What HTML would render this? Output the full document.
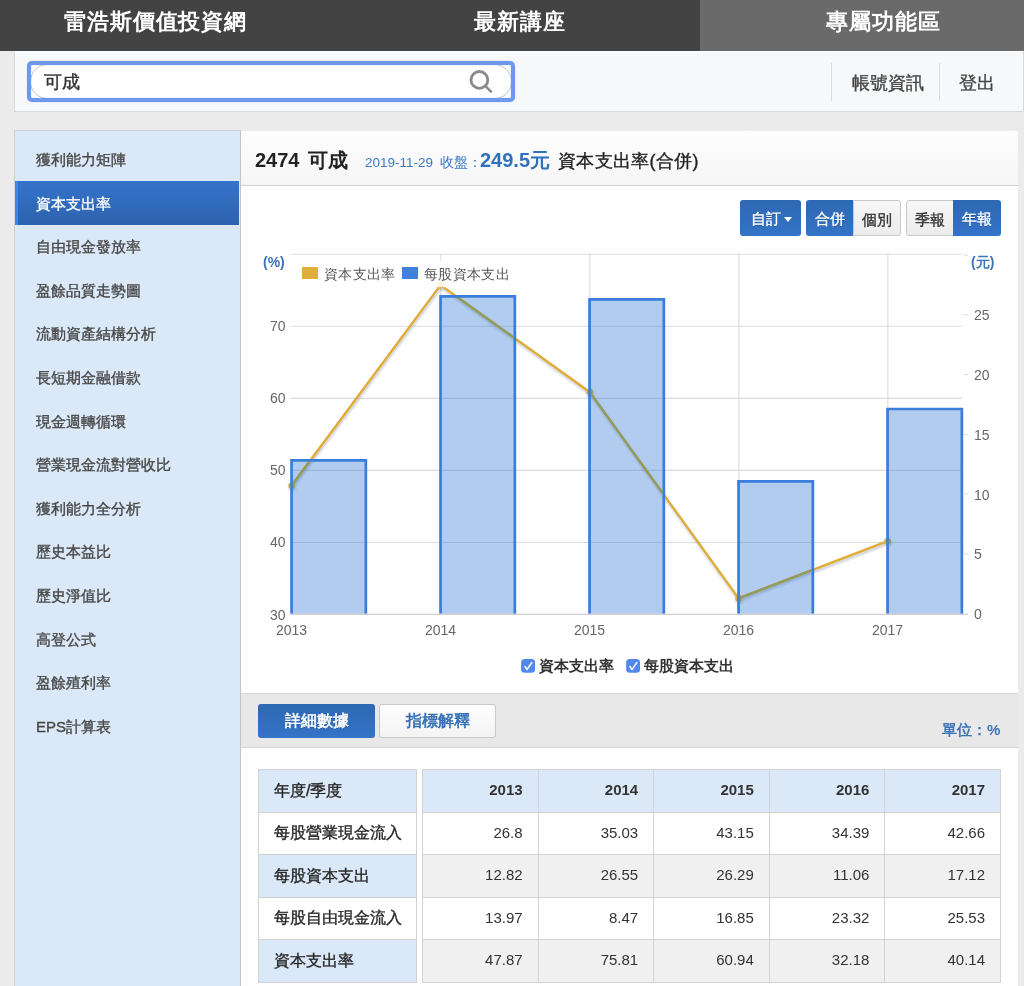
<!DOCTYPE html>
<html lang="zh-Hant">
<head>
<meta charset="utf-8">
<style>
*{box-sizing:border-box;margin:0;padding:0}
html,body{width:1024px;height:986px;overflow:hidden}
body{background:#ebebeb;font-family:"Liberation Sans",sans-serif;position:relative;color:#333}
#root{position:absolute;left:0;top:0;width:1024px;height:986px;overflow:hidden;will-change:transform}
.st{-webkit-text-stroke:0.35px currentColor}
.a{position:absolute;white-space:nowrap}
#nav{left:0;top:0;width:1024px;height:51px;background:#434343}
#nav3{left:700px;top:0;width:324px;height:51px;background:#6a6a6a}
.navt{color:#fff;font-size:22px;letter-spacing:0.9px;font-weight:bold;top:7px;line-height:30px}
#sp{left:14px;top:51px;width:1010px;height:61px;background:#f7f8fa;border:1px solid #d9d9d9;border-top:1px solid #fff}
#ring{left:27px;top:61px;width:488px;height:41px;border:4px solid #6d98ec;border-radius:5px;box-shadow:0 0 1px #6d98ec,inset 0 0 1px #6d98ec}
#ringbg{left:27px;top:61px;width:488px;height:41px;background:#fff;border-radius:5px}
#pill{left:30px;top:64px;width:482px;height:35px;border:1px solid #c4c4c4;border-radius:17.5px;background:#fff}
.sep{top:63px;width:1px;height:38px;background:#dcdcdc}
.hl{font-size:18px;color:#444;top:71px;line-height:24px;-webkit-text-stroke:0.35px currentColor}
#side{left:14px;top:130px;width:227px;height:880px;background:#dae8f7;border:1px solid #d0d0d0;border-right:1px solid #c4c4c4}
.si{left:36px;font-size:15px;color:#474747;line-height:20px;-webkit-text-stroke:0.35px currentColor}
#act{left:15px;top:181px;width:224px;height:44px;background:linear-gradient(#3573cb,#2d63ae);border-left:3px solid #3d86ea}
#main{left:241px;top:131px;width:777px;height:900px;background:#fff;border-top-right-radius:3px}
#hdr{left:241px;top:131px;width:777px;height:55px;border-top-right-radius:3px;background:linear-gradient(#fdfdfd,#f6f6f6);border-bottom:1px solid #d2d2d2}
.btn{top:200px;height:36px;font-size:15px;line-height:37px;text-align:center;color:#fff;-webkit-text-stroke:0.35px currentColor}
.bb{text-shadow:0 1px 0 rgba(0,0,0,0.25)}
.bb{background:linear-gradient(#2e68b3,#3473c7)}
.bw{background:linear-gradient(#f7f7f7,#ececec);color:#333;border:1px solid #c9c9c9}
#tabs{left:241px;top:693px;width:777px;height:55px;background:#e8e8e8;border-top:1px solid #d6d6d6;border-bottom:1px solid #d6d6d6}
table{border-collapse:collapse;position:absolute;top:769px;font-size:15px;table-layout:fixed;white-space:nowrap}
td{border:1px solid #d2d2d2;height:42.5px;padding:0 15px 2px;color:#333}
#lt td{background:#fff;font-size:16px;width:158px;padding:1px 15px 0;color:#262626;-webkit-text-stroke:0.35px currentColor}
#lt tr:nth-child(odd) td{background:#dae8f7}
#rt td{text-align:right;width:115.6px}
#rt tr:nth-child(1) td{background:#dae8f7;font-weight:bold}
#rt tr:nth-child(3) td,#rt tr:nth-child(5) td{background:#f0f0f0}
</style>
</head>
<body>
<div id="root">
<div id="nav" class="a"></div>
<div id="nav3" class="a"></div>
<div class="a navt" style="left:64px">雷浩斯價值投資網</div>
<div class="a navt" style="left:474px">最新講座</div>
<div class="a navt" style="left:826px">專屬功能區</div>

<div id="sp" class="a"></div>
<div id="ringbg" class="a"></div>
<div id="pill" class="a"></div>
<div id="ring" class="a"></div>
<div class="a" style="left:44px;top:70px;font-size:18px;line-height:24px;color:#333;-webkit-text-stroke:0.4px #333">可成</div>
<svg class="a" style="left:466px;top:67px" width="28" height="28" viewBox="0 0 28 28"><circle cx="13.4" cy="12.9" r="8.4" fill="none" stroke="#8a8a8a" stroke-width="2.8"/><line x1="19.8" y1="19.4" x2="25" y2="24.6" stroke="#8a8a8a" stroke-width="2.6" stroke-linecap="round"/></svg>
<div class="a sep" style="left:831px"></div>
<div class="a sep" style="left:939px"></div>
<div class="a hl" style="left:852px">帳號資訊</div>
<div class="a hl" style="left:959px">登出</div>

<div id="side" class="a"></div>
<div id="act" class="a"></div>
<div class="a si" style="top:150px">獲利能力矩陣</div>
<div class="a si" style="top:193.6px;color:#fff">資本支出率</div>
<div class="a si" style="top:237.2px">自由現金發放率</div>
<div class="a si" style="top:280.8px">盈餘品質走勢圖</div>
<div class="a si" style="top:324.4px">流動資產結構分析</div>
<div class="a si" style="top:368px">長短期金融借款</div>
<div class="a si" style="top:411.6px">現金週轉循環</div>
<div class="a si" style="top:455.2px">營業現金流對營收比</div>
<div class="a si" style="top:498.8px">獲利能力全分析</div>
<div class="a si" style="top:542.4px">歷史本益比</div>
<div class="a si" style="top:586px">歷史淨值比</div>
<div class="a si" style="top:629.6px">高登公式</div>
<div class="a si" style="top:673.2px">盈餘殖利率</div>
<div class="a si" style="top:716.8px">EPS計算表</div>

<div id="main" class="a"></div>
<div id="hdr" class="a"></div>
<div class="a" style="left:255px;top:148px;font-size:20px;font-weight:bold;color:#222;line-height:24px">2474</div>
<div class="a" style="left:307.5px;top:148px;font-size:20px;font-weight:bold;color:#222;line-height:24px">可成</div>
<div class="a" style="left:365px;top:154px;font-size:13.5px;color:#3d7ac4;line-height:18px">2019-11-29</div>
<div class="a" style="left:439.5px;top:154px;font-size:13.5px;color:#3d7ac4;line-height:18px">收盤：</div>
<div class="a" style="left:480px;top:148px;font-size:20px;font-weight:bold;color:#3071bd;line-height:24px">249.5元</div>
<div class="a st" style="left:558px;top:149px;font-size:18px;letter-spacing:0.3px;color:#222;line-height:24px">資本支出率(合併)</div>

<div class="a btn bb" style="left:740px;width:61px;border-radius:3px;text-align:left;padding-left:11px">自訂<span style="position:absolute;left:44px;top:17px;width:0;height:0;border-left:4.5px solid transparent;border-right:4.5px solid transparent;border-top:5px solid #fff"></span></div>
<div class="a btn bb" style="left:806px;width:47px;border-radius:3px 0 0 3px">合併</div>
<div class="a btn bw" style="left:853px;width:48px;border-radius:0 3px 3px 0">個別</div>
<div class="a btn bw" style="left:906px;width:48px;border-radius:3px 0 0 3px">季報</div>
<div class="a btn bb" style="left:953px;width:48px;border-radius:0 3px 3px 0">年報</div>

<svg class="a" style="left:241px;top:186px" width="777" height="507" viewBox="241 186 777 507">
 <defs>
  <filter id="sh" x="-10%" y="-10%" width="120%" height="120%"><feDropShadow dx="0.6" dy="2" stdDeviation="1" flood-color="#304060" flood-opacity="0.3"/></filter>
  <clipPath id="bc"><rect x="292.90" y="461.75" width="71.60" height="151.85"/><rect x="441.90" y="297.68" width="71.60" height="315.92"/><rect x="590.90" y="300.78" width="71.60" height="312.82"/><rect x="739.90" y="482.78" width="71.60" height="130.82"/><rect x="888.90" y="410.37" width="71.60" height="203.23"/></clipPath>
  <clipPath id="pl"><rect x="241" y="287.2" width="777" height="400"/><rect x="241" y="186" width="190" height="120"/><rect x="520" y="186" width="500" height="120"/></clipPath>
 </defs>
 <g stroke="#dcdcdc" stroke-width="1.1">
  <line x1="290.3" y1="254.20" x2="962" y2="254.20"/>
  <line x1="290.3" y1="326.27" x2="962" y2="326.27"/>
  <line x1="290.3" y1="398.34" x2="962" y2="398.34"/>
  <line x1="290.3" y1="470.41" x2="962" y2="470.41"/>
  <line x1="290.3" y1="542.48" x2="962" y2="542.48"/>
  <line x1="440.85" y1="613.60" x2="440.85" y2="254.20"/>
  <line x1="589.85" y1="613.60" x2="589.85" y2="254.20"/>
  <line x1="738.85" y1="613.60" x2="738.85" y2="254.20"/>
  <line x1="887.85" y1="613.60" x2="887.85" y2="254.20"/>
 </g>
 <g stroke="#e0e0e0" stroke-width="1.1">
  <line x1="963.5" y1="255.10" x2="968" y2="255.10"/>
  <line x1="963.5" y1="314.85" x2="968" y2="314.85"/>
  <line x1="963.5" y1="374.60" x2="968" y2="374.60"/>
  <line x1="963.5" y1="434.35" x2="968" y2="434.35"/>
  <line x1="963.5" y1="494.10" x2="968" y2="494.10"/>
  <line x1="963.5" y1="553.85" x2="968" y2="553.85"/>
 </g>
 <g filter="url(#sh)">
  <polyline points="291.55,485.74 440.55,285.13 589.55,391.90 738.55,598.40 887.55,541.24" fill="none" stroke="#e0ab36" stroke-width="2.4" stroke-linejoin="round"/>
  <g fill="#e0ab36"><circle cx="291.55" cy="485.74" r="3.3"/><circle cx="440.55" cy="285.13" r="3.3"/><circle cx="589.55" cy="391.90" r="3.3"/><circle cx="738.55" cy="598.40" r="3.3"/><circle cx="887.55" cy="541.24" r="3.3"/></g>
 </g>
 <rect x="298" y="260.5" width="214" height="26.7" fill="#fff" fill-opacity="0.86"/>
 <g fill="rgba(50,120,210,0.38)">
  <rect x="291.55" y="460.40" width="74.3" height="153.50"/>
  <rect x="440.55" y="296.33" width="74.3" height="317.57"/>
  <rect x="589.55" y="299.43" width="74.3" height="314.47"/>
  <rect x="738.55" y="481.43" width="74.3" height="132.47"/>
  <rect x="887.55" y="409.02" width="74.3" height="204.88"/>
 </g>
 <g fill="none" stroke="#3a7ddc" stroke-width="2.7" stroke-linejoin="miter">
  <path d="M291.55 613.80 V460.40 H365.85 V613.80"/>
  <path d="M440.55 613.80 V296.33 H514.85 V613.80"/>
  <path d="M589.55 613.80 V299.43 H663.85 V613.80"/>
  <path d="M738.55 613.80 V481.43 H812.85 V613.80"/>
  <path d="M887.55 613.80 V409.02 H961.85 V613.80"/>
 </g>
 <g clip-path="url(#bc)">
  <polyline points="291.55,485.74 440.55,285.13 589.55,391.90 738.55,598.40 887.55,541.24" fill="none" stroke="#949c5a" stroke-width="2.4" stroke-linejoin="round"/>
  <g fill="#949c5a"><circle cx="291.55" cy="485.74" r="3.3"/><circle cx="440.55" cy="285.13" r="3.3"/><circle cx="589.55" cy="391.90" r="3.3"/><circle cx="738.55" cy="598.40" r="3.3"/><circle cx="887.55" cy="541.24" r="3.3"/></g>
 </g>
 <line x1="290.3" y1="614.3" x2="968" y2="614.3" stroke="#d0d0d0" stroke-width="1.2"/>
 <g font-family="Liberation Sans" font-size="14" fill="#666">
  <text x="285.5" y="331.27" text-anchor="end">70</text>
  <text x="285.5" y="403.34" text-anchor="end">60</text>
  <text x="285.5" y="475.41" text-anchor="end">50</text>
  <text x="285.5" y="547.48" text-anchor="end">40</text>
  <text x="285.5" y="619.55" text-anchor="end">30</text>
  <text x="974" y="320.35">25</text>
  <text x="974" y="380.10">20</text>
  <text x="974" y="439.85">15</text>
  <text x="974" y="499.60">10</text>
  <text x="974" y="559.35">5</text>
  <text x="974" y="619.10">0</text>
  <text x="291.55" y="634.5" text-anchor="middle">2013</text>
  <text x="440.55" y="634.5" text-anchor="middle">2014</text>
  <text x="589.55" y="634.5" text-anchor="middle">2015</text>
  <text x="738.55" y="634.5" text-anchor="middle">2016</text>
  <text x="887.55" y="634.5" text-anchor="middle">2017</text>
 </g>
 <g font-family="Liberation Sans" font-size="14" font-weight="bold" fill="#3b74b9">
  <text x="263" y="266.5">(%)</text>
  <text x="971" y="267">(元)</text>
 </g>
 <rect x="302" y="267" width="16" height="12" fill="#e0ae3c"/>
 <rect x="402" y="267" width="16" height="12" fill="#3f82dc"/>
 <g font-family="Liberation Sans" font-size="14" fill="#555" letter-spacing="0.35" style="-webkit-text-stroke:0.3px #555">
  <text x="324" y="278.5">資本支出率</text>
  <text x="424" y="278.5">每股資本支出</text>
 </g>
 <rect x="521.15" y="658.9" width="13.9" height="13.8" rx="3.5" fill="#5088f0"/>
 <path d="M524.9 666.6 L527.1 669.4 L531.8 662.6" fill="none" stroke="#fff" stroke-width="1.6" stroke-linecap="round" stroke-linejoin="round"/>
 <rect x="626.15" y="658.9" width="13.9" height="13.8" rx="3.5" fill="#5088f0"/>
 <path d="M629.9 666.6 L632.1 669.4 L636.8 662.6" fill="none" stroke="#fff" stroke-width="1.6" stroke-linecap="round" stroke-linejoin="round"/>
 <g font-family="Liberation Sans" font-size="15" fill="#333" font-weight="bold">
  <text x="539" y="671">資本支出率</text>
  <text x="644" y="671">每股資本支出</text>
 </g>
</svg>

<div id="tabs" class="a"></div>
<div class="a btn bb" style="left:258px;top:704px;width:117px;height:34px;line-height:34px;border-radius:3px;font-size:16px;-webkit-text-stroke:0.55px #fff">詳細數據</div>
<div class="a btn bw" style="left:379px;top:704px;width:117px;height:34px;line-height:32px;border-radius:3px;font-size:16px;-webkit-text-stroke:0.55px #2f6db5;color:#2f6db5;background:linear-gradient(#fff,#f3f3f3)">指標解釋</div>
<div class="a" style="left:942px;top:721px;font-size:15px;font-weight:bold;color:#3b74b9;line-height:18px">單位：%</div>

<table id="lt" style="left:258px;width:159px">
<tr><td>年度/季度</td></tr>
<tr><td>每股營業現金流入</td></tr>
<tr><td>每股資本支出</td></tr>
<tr><td>每股自由現金流入</td></tr>
<tr><td>資本支出率</td></tr>
</table>
<table id="rt" style="left:422px;width:579px">
<tr><td>2013</td><td>2014</td><td>2015</td><td>2016</td><td>2017</td></tr>
<tr><td>26.8</td><td>35.03</td><td>43.15</td><td>34.39</td><td>42.66</td></tr>
<tr><td>12.82</td><td>26.55</td><td>26.29</td><td>11.06</td><td>17.12</td></tr>
<tr><td>13.97</td><td>8.47</td><td>16.85</td><td>23.32</td><td>25.53</td></tr>
<tr><td>47.87</td><td>75.81</td><td>60.94</td><td>32.18</td><td>40.14</td></tr>
</table>
</div>
</body>
</html>
